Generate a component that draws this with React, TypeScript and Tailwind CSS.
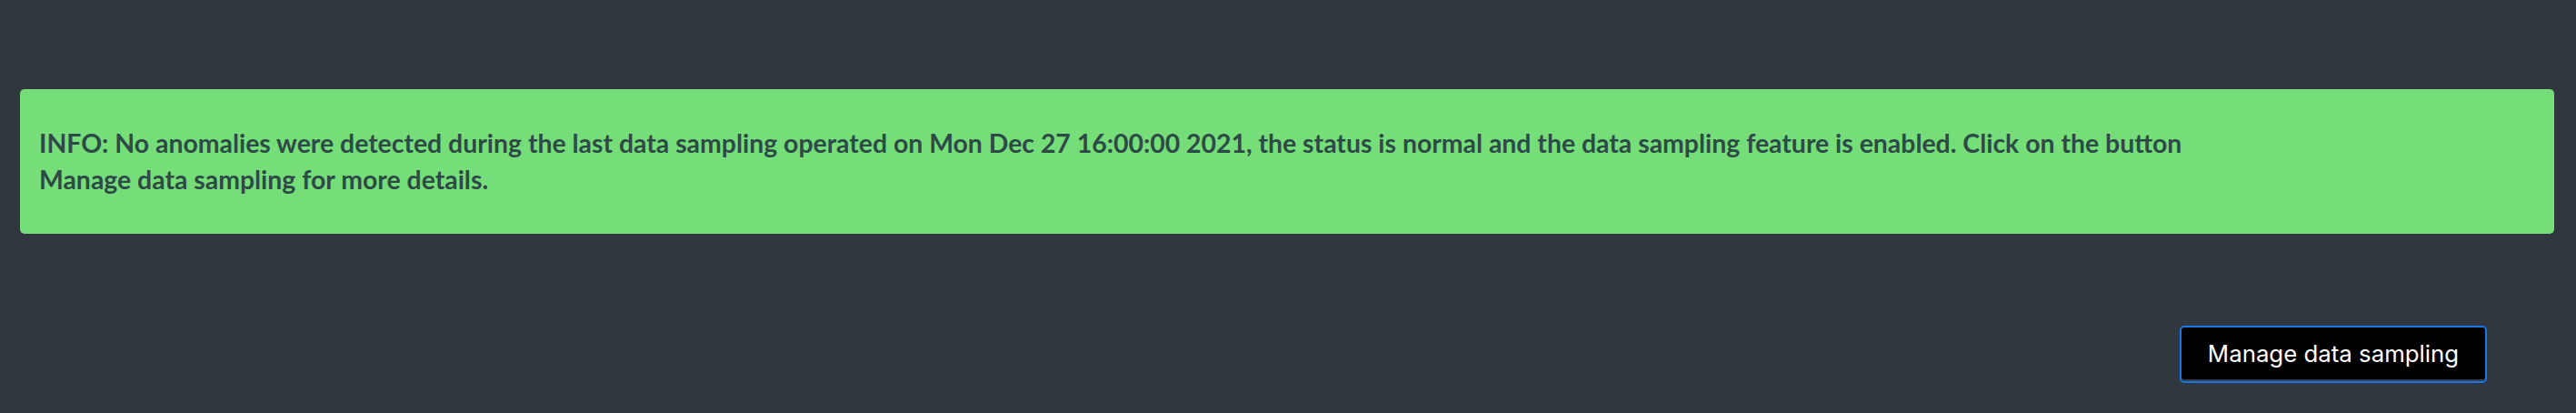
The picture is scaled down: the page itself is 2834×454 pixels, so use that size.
export default function App() {
  return (
    <div className="min-h-[454px] w-full bg-[#31373f] pt-[98px]">
      <div className="ml-[22px] mr-[24px] rounded-[5px] bg-[#75de79] pl-[21px] pr-[20px] pt-[39px] pb-[40px]">
        <p className="max-w-[2410px] font-['Lato',sans-serif] text-[28.4px] leading-[40px] font-bold text-[#2e4a47]">
          INFO: No anomalies were detected during the last data sampling operated on Mon Dec 27 16:00:00 2021, the
          status is normal and the data sampling feature is enabled. Click on the button Manage data sampling for more
          details.
        </p>
      </div>
      <div className="mt-[101px] flex justify-end pr-[98px]">
        <button
          type="button"
          className="h-[63px] w-[338px] rounded-[5px] border-2 border-[#1577ea] bg-black font-['Inter',sans-serif] text-[25.8px] text-white shadow-[inset_0_-2px_0_#3a3f46]"
        >
          Manage data sampling
        </button>
      </div>
    </div>
  );
}
